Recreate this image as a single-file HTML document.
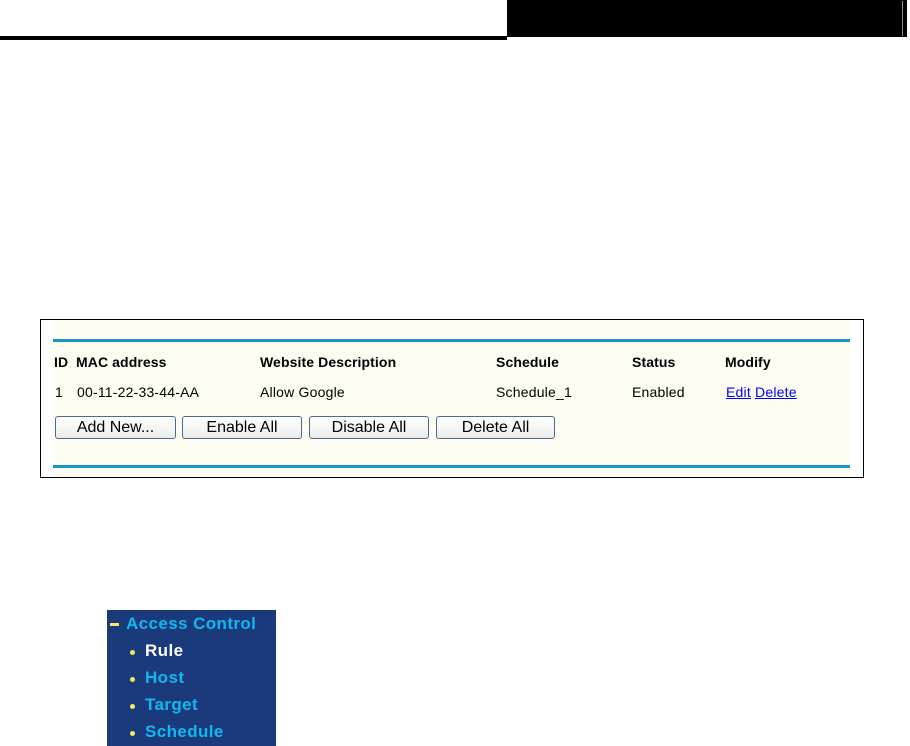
<!DOCTYPE html>
<html><head><style>
body{margin:0;width:910px;height:746px;background:#fff;position:relative;overflow:hidden;font-family:"Liberation Sans",Arial,sans-serif;}
.a{position:absolute}
.t{font-size:14px;letter-spacing:0.2px;color:#000;position:absolute}
.b{font-weight:bold;letter-spacing:0.1px}
.btn{position:absolute;top:416px;height:23px;border:1px solid #4a6a9a;border-radius:3px;background:linear-gradient(#fff,#ececea);font-size:16px;text-align:center;line-height:22px;color:#000;box-sizing:border-box}
a{color:#00f;text-decoration:underline}
.m{position:absolute;left:126px;font-weight:bold;font-size:17px;letter-spacing:0.4px;color:#10b8f0}
.dot{position:absolute;left:130px;width:5px;height:5px;border-radius:50%;background:#f8e860}
</style></head><body>
<div class="a" style="left:507px;top:0;width:400px;height:37px;background:#000"></div>
<div class="a" style="left:902px;top:1px;width:1px;height:35px;background:#888"></div>
<div class="a" style="left:0;top:36px;width:507px;height:4px;background:#000"></div>

<div class="a" style="left:40px;top:319px;width:822px;height:157px;border:1px solid #000;background:#fff"></div>
<div class="a" style="left:53px;top:320px;width:797px;height:156px;background:#fdfdf1"></div>
<div class="a" style="left:53px;top:339px;width:797px;height:3px;background:#1a95c8"></div>
<div class="a" style="left:53px;top:465px;width:797px;height:3px;background:#1a95c8"></div>

<div class="t b" style="left:54px;top:354px">ID</div>
<div class="t b" style="left:76px;top:354px">MAC address</div>
<div class="t b" style="left:260px;top:354px">Website Description</div>
<div class="t b" style="left:496px;top:354px">Schedule</div>
<div class="t b" style="left:632px;top:354px">Status</div>
<div class="t b" style="left:725px;top:354px">Modify</div>
<div class="t" style="left:55px;top:384px">1</div>
<div class="t" style="left:77px;top:384px">00-11-22-33-44-AA</div>
<div class="t" style="left:260px;top:384px">Allow Google</div>
<div class="t" style="left:496px;top:384px">Schedule_1</div>
<div class="t" style="left:632px;top:384px">Enabled</div>
<div class="t" style="left:726px;top:384px"><a>Edit</a> <a>Delete</a></div>

<div class="btn" style="left:55px;width:121px">Add New...</div>
<div class="btn" style="left:182px;width:120px">Enable All</div>
<div class="btn" style="left:309px;width:120px">Disable All</div>
<div class="btn" style="left:436px;width:119px">Delete All</div>

<div class="a" style="left:107px;top:610px;width:169px;height:136px;background:#1b3a7c"></div>
<div class="a" style="left:110px;top:623px;width:9px;height:3px;background:#f8e860"></div>
<div class="m" style="top:614px">Access Control</div>
<div class="dot" style="top:650px"></div><div class="m" style="left:145px;top:641px;color:#fff">Rule</div>
<div class="dot" style="top:677px"></div><div class="m" style="left:145px;top:668px">Host</div>
<div class="dot" style="top:704px"></div><div class="m" style="left:145px;top:695px">Target</div>
<div class="dot" style="top:731px"></div><div class="m" style="left:145px;top:722px">Schedule</div>
</body></html>
